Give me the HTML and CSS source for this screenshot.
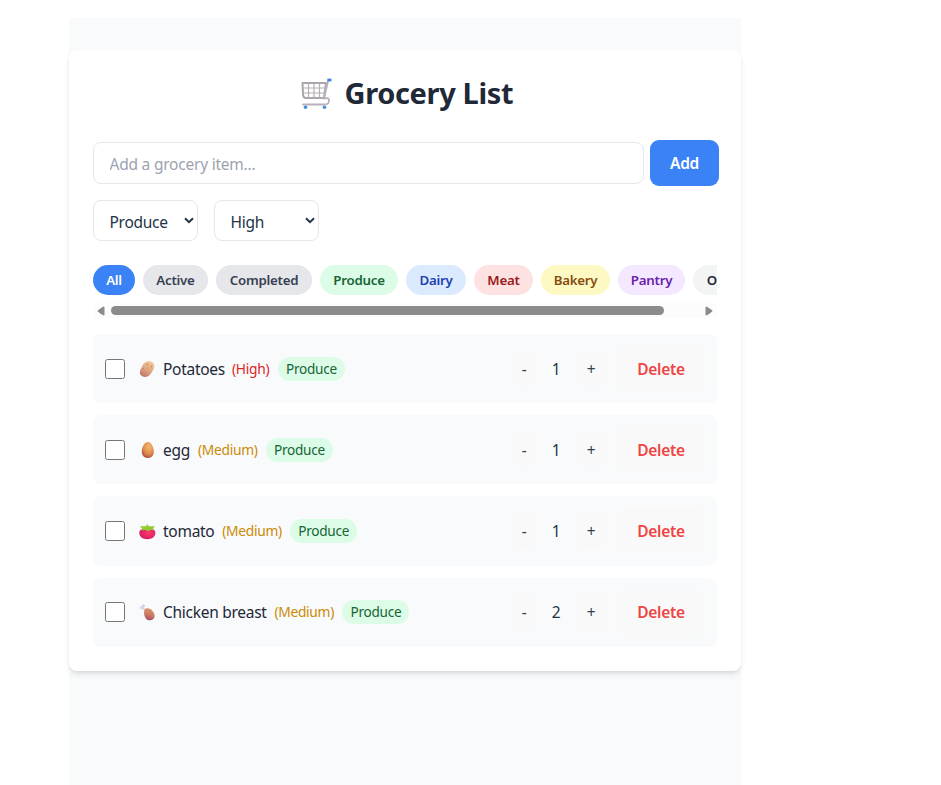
FILE: index.html
```html
<!DOCTYPE html>
<html lang="en">
<head>
<meta charset="utf-8">
<title>Grocery List</title>
<link rel="stylesheet" href="styles.css">
</head>
<body>
<div class="page">
<main class="card">
  <h1 class="title">
    <svg class="cart" viewBox="0 0 32 32" fill="none" stroke-linecap="round" stroke-linejoin="round">
      <path d="M2.500 5H26L24 20H6Q3 20 3 16Z" stroke="#aaa5aa" stroke-width="2"/>
      <path d="M3 10H25.500M3.300 15H25M8.500 5V20M14 5V20M19.500 5V20" stroke="#b5b0b5" stroke-width="1.200"/>
      <path d="M28.200 2L24 20.500Q29.500 19 29 23Q28.500 26.500 25 26.500H3" stroke="#b9afbd" stroke-width="1.900"/>
      <path d="M27.500 2H31.500" stroke="#3f86dc" stroke-width="2.800" stroke-linecap="butt"/>
      <circle cx="5.500" cy="29.200" r="1.800" fill="#4b8be0"/><circle cx="24.500" cy="29.200" r="1.800" fill="#4b8be0"/>
    </svg>
    <span class="heading">Grocery List</span>
  </h1>
  <div class="add-row">
    <input class="field" type="text" placeholder="Add a grocery item...">
    <button class="add">Add</button>
  </div>
  <div class="selects">
    <div class="select"><span>Produce</span><svg class="chev" viewBox="0 0 10 7"><path d="M1 1.200L5 5.100L9 1.200" fill="none" stroke="#213547" stroke-width="2"/></svg></div>
    <div class="select"><span>High</span><svg class="chev" viewBox="0 0 10 7"><path d="M1 1.200L5 5.100L9 1.200" fill="none" stroke="#213547" stroke-width="2"/></svg></div>
  </div>
  <div class="filters">
    <button class="chip all">All</button>
    <button class="chip active">Active</button>
    <button class="chip completed">Completed</button>
    <button class="chip produce">Produce</button>
    <button class="chip dairy">Dairy</button>
    <button class="chip meat">Meat</button>
    <button class="chip bakery">Bakery</button>
    <button class="chip pantry">Pantry</button>
    <button class="chip other">Other</button>
  </div>
  <div class="scrollbar">
    <svg class="arrow" viewBox="0 0 8 10"><path d="M7 .9V9.100Q4 8 .8 5Q4 2 7 .9Z" fill="#8b8b8b" stroke="#8b8b8b" stroke-linejoin="round"/></svg>
    <div class="thumb"></div>
    <svg class="arrow" viewBox="0 0 8 10"><path d="M1 .9V9.100Q4 8 7.200 5Q4 2 1 .9Z" fill="#8b8b8b" stroke="#8b8b8b" stroke-linejoin="round"/></svg>
  </div>
  <ul class="list">
    <li class="item">
      <span class="check"></span>
      <svg class="emoji" viewBox="0 0 18 18"><defs><linearGradient id="po" x1=".8" y1="0" x2=".3" y2="1"><stop stop-color="#f3cc96"/><stop offset=".55" stop-color="#e0a582"/><stop offset="1" stop-color="#c0766d"/></linearGradient></defs><path d="M9 1.500C13 .5 16.800 2.800 16.300 6.500C16 9.500 14.500 10.800 13.300 13C11 17 6 18 3.200 15.600C.8 13.500 2 10 3.600 7.500C5 5 5.500 2.500 9 1.500Z" fill="url(#po)"/><g fill="#b87d5c"><circle cx="9.500" cy="4.500" r=".8"/><circle cx="13.300" cy="6.500" r=".7"/><circle cx="10" cy="8" r=".5"/><circle cx="5.500" cy="8.500" r=".6"/></g></svg>
      <span class="name n1">Potatoes</span><span class="priority high">(High)</span><span class="tag">Produce</span>
      <div class="actions"><button class="step minus">-</button><span class="qty">1</span><button class="step plus">+</button><button class="delete">Delete</button></div>
    </li>
    <li class="item">
      <span class="check"></span>
      <svg class="emoji" viewBox="0 0 18 18"><defs><radialGradient id="eg" cx=".6" cy=".3" r=".75"><stop stop-color="#f4b96e"/><stop offset=".6" stop-color="#df8c4d"/><stop offset="1" stop-color="#a74c46"/></radialGradient></defs><path d="M9.800 1C13 1 15.800 6 15.800 10.500C15.800 14.500 13.500 17 9.800 17S3.800 14.500 3.800 10.500C3.800 6 6.600 1 9.800 1Z" fill="url(#eg)"/></svg>
      <span class="name n2">egg</span><span class="priority medium">(Medium)</span><span class="tag">Produce</span>
      <div class="actions"><button class="step minus">-</button><span class="qty">1</span><button class="step plus">+</button><button class="delete">Delete</button></div>
    </li>
    <li class="item">
      <span class="check"></span>
      <svg class="emoji" viewBox="0 0 18 18"><defs><radialGradient id="to" cx=".6" cy=".4" r=".7"><stop stop-color="#ff3a66"/><stop offset="1" stop-color="#cf1767"/></radialGradient></defs><path d="M1.300 10.500C1.300 7.500 4 6.500 9 7C14 6.500 17.400 7.500 17.400 10.500C17.400 15 14 17.200 9.300 17.200S1.300 15 1.300 10.500Z" fill="url(#to)"/><path d="M8.200 2.800H10.200V4.200H16.800L14.800 7.200L16 8.300L12.500 7.800L10.200 9.300L7.500 8L3.500 8.300L4.500 7L1.800 4.200H8.500Z" fill="#8fcb30"/></svg>
      <span class="name n3">tomato</span><span class="priority medium">(Medium)</span><span class="tag">Produce</span>
      <div class="actions"><button class="step minus">-</button><span class="qty">1</span><button class="step plus">+</button><button class="delete">Delete</button></div>
    </li>
    <li class="item">
      <span class="check"></span>
      <svg class="emoji" viewBox="0 0 18 18"><defs><linearGradient id="ch" x1=".7" y1="0" x2=".5" y2="1"><stop stop-color="#dc9868"/><stop offset=".6" stop-color="#c97864"/><stop offset="1" stop-color="#a54968"/></linearGradient></defs><path d="M4 4L8 8" stroke="#d9cbe0" stroke-width="2"/><circle cx="3" cy="4.500" r="1.500" fill="#dfd4eb"/><circle cx="5.400" cy="2.700" r="1.500" fill="#d6cae4"/><path d="M6.500 7C8 4.500 12 4.800 14.500 8C17.500 11.500 17 14.800 15 16.300C12.500 18 9 17.500 7.500 15C6.300 13 5.500 9.500 6.500 7Z" fill="url(#ch)"/></svg>
      <span class="name n4">Chicken breast</span><span class="priority medium">(Medium)</span><span class="tag">Produce</span>
      <div class="actions"><button class="step minus">-</button><span class="qty">2</span><button class="step plus">+</button><button class="delete">Delete</button></div>
    </li>
  </ul>
</main>
</div>
</body>
</html>
```

FILE: styles.css
```css
* { box-sizing: border-box; }
body {
  margin: 0;
  background: #fff;
  color: #213547;
  font-family: "Noto Sans", "Open Sans", sans-serif;
  font-size: 15.500px;
  letter-spacing: -.28px;
  line-height: 24px;
  overflow: hidden;
}
button, input { font: inherit; letter-spacing: inherit; border: 0; padding: 0; margin: 0; }
.page {
  width: 672px;
  height: 767px;
  margin: 18px 0 0 69px;
  padding-top: 32px;
  background: #f9fafb;
}
.card {
  height: 621px;
  padding: 24px;
  background: #fff;
  border-radius: 8px;
  box-shadow: 0 4px 6px -1px rgba(0, 0, 0, .1), 0 2px 4px -2px rgba(0, 0, 0, .1);
}
.title {
  display: flex;
  align-items: center;
  height: 40px;
  margin: 0 0 28px;
  padding-left: 207px;
  gap: 12.500px;
  color: #1f2937;
  font-size: 29px;
  font-weight: 700;
  letter-spacing: -.35px;
}
.cart { width: 32px; height: 32px; }
.heading { padding-bottom: 2px; }
.add-row { display: flex; height: 42px; align-items: center; }
.field {
  flex: none;
  width: 551px;
  height: 42px;
  padding: 1px 15.500px 0;
  border: 1px solid #e5e7eb;
  border-radius: 8px;
  background: #fff;
  letter-spacing: -.22px;
}
.field::placeholder { color: #9ca3af; opacity: 1; }
.add {
  flex: none;
  width: 69px;
  height: 46px;
  margin-left: 6px;
  border-radius: 9px;
  background: #3b82f6;
  color: #fff;
  font-weight: 600;
}
.selects { display: flex; gap: 16px; margin-top: 16px; }
.select {
  display: flex;
  align-items: center;
  justify-content: space-between;
  width: 105px;
  height: 41px;
  padding: 2px 3px 0 15.500px;
  border: 1px solid #e5e7eb;
  border-radius: 8px;
}
.chev { width: 10px; height: 7px; margin-top: -3px; }
.filters { display: flex; gap: 8px; margin-top: 24px; overflow: hidden; }
.chip {
  flex: none;
  height: 30px;
  border-radius: 15px;
  font-size: 13.300px;
  font-weight: 600;
  letter-spacing: -.25px;
}
.all { width: 42px; background: #3b82f6; color: #fff; }
.active { width: 65px; background: #e5e7eb; color: #374151; }
.completed { width: 96px; background: #e5e7eb; color: #374151; }
.produce { width: 78px; background: #dcfce7; color: #166534; }
.dairy { width: 60px; background: #dbeafe; color: #1e40af; }
.meat { width: 59px; background: #fee2e2; color: #991b1b; }
.bakery { width: 69px; background: #fef9c3; color: #854d0e; }
.pantry { width: 67px; background: #f3e8ff; color: #6b21a8; }
.other { width: 64px; background: #f3f4f6; color: #1f2937; }
.scrollbar {
  display: flex;
  align-items: center;
  height: 15px;
  margin-top: 8px;
  padding: 0 4px;
  background: #fcfcfc;
}
.arrow { width: 8px; height: 10px; }
.thumb { width: 553px; height: 9px; margin: 0 41px 0 6px; border-radius: 5px; background: #8b8b8b; }
.list { display: grid; gap: 12px; margin: 16px 0 0; padding: 0; list-style: none; }
.item {
  display: flex;
  align-items: center;
  height: 69.200px;
  padding: 0 12px;
  border-radius: 8px;
  background: #f9fafb;
}
.check { width: 20px; height: 20px; border: 1px solid #767676; border-radius: 2.500px; background: #fff; }
.emoji { width: 18px; height: 18px; margin: 0 7px 0 13px; }
.name { color: #1f2937; margin-right: 8px; }
.priority { font-size: 13.800px; letter-spacing: -.3px; margin-right: 8px; }
.high { color: #dc2626; }
.medium { color: #ca8a04; }
.tag {
  width: 67px;
  height: 24px;
  border-radius: 12px;
  background: #dcfce7;
  color: #166534;
  font-size: 13.600px;
  text-align: center;
}
.n1 { width: 61px; }
.n2 { width: 27px; }
.n3 { width: 51.200px; }
.n4 { width: 103.400px; white-space: nowrap; }
.high { width: 38px; }
.medium { width: 60px; }
.actions { display: flex; align-items: center; margin-left: auto; }
.step { height: 35px; border-radius: 8px; background: #f9f9f9; color: #374151; }
.minus { width: 24px; }
.plus { width: 30px; }
.qty { width: 40px; text-align: center; }
.delete {
  width: 88px;
  height: 45px;
  margin-left: 11px;
  border-radius: 8px;
  background: #f9f9f9;
  color: #ef4444;
  font-weight: 600;
}
```
